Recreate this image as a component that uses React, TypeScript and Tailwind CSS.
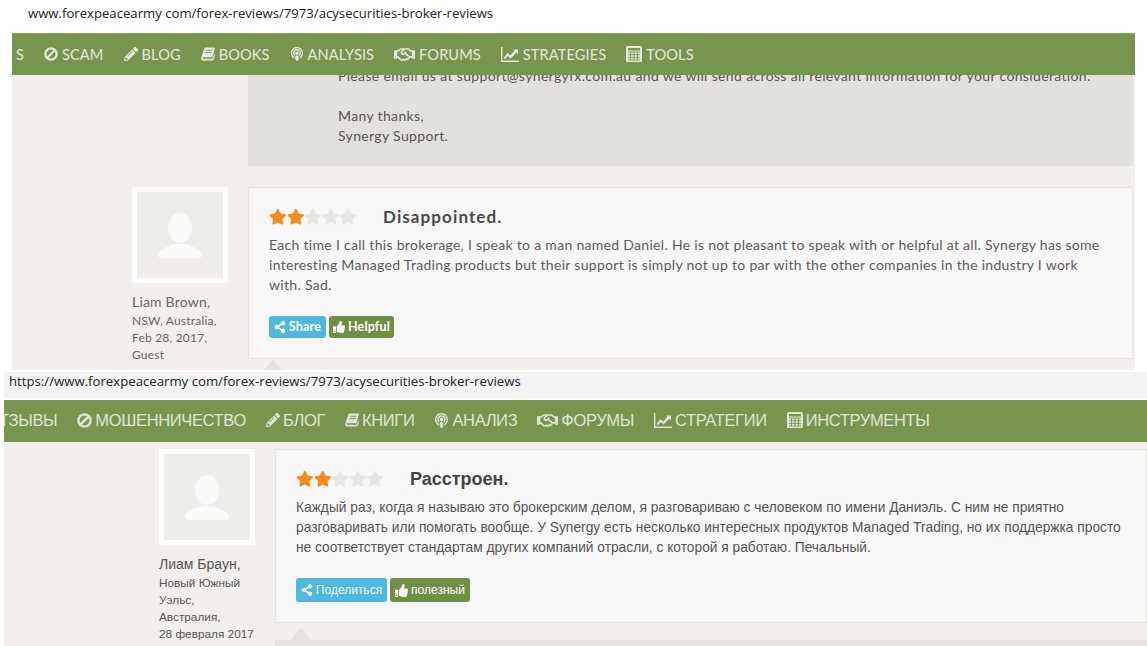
import type { ReactNode } from 'react'
import { FaPencilAlt, FaPodcast, FaRegHandshake, FaShareAlt, FaStar, FaThumbsUp } from 'react-icons/fa'

const TOP_FONT = "font-['Lato','Liberation_Sans',sans-serif]"
const RU_FONT = "font-['Liberation_Sans',Arial,sans-serif]"

// ─── Nav icons (old icon-font shapes, not in the packages) ───────────────────

function BanIcon({ size }: { size: number }) {
  return (
    <svg width={size} height={size} viewBox="0 0 16 16" fill="none" stroke="currentColor" strokeWidth="2.6">
      <circle cx="8" cy="8" r="6.5" />
      <path d="M3.5 12.5 L12.5 3.5" />
    </svg>
  )
}

function BookIcon() {
  return (
    <svg width="14" height="14" viewBox="0 0 15 14" fill="currentColor">
      <path d="M4 0 H15 L12.4 10.5 H2.4 C1.6 10.5 1.5 12 2.4 12 H12.6 L14.4 6 L14.6 11 L13 14 H2 C0.4 14 -0.3 12.4 0.2 11 Z" />
      <path d="M5.5 3 H12 M5 5.5 H11.4" stroke="#77954f" strokeWidth="1" />
    </svg>
  )
}

function ChartIcon() {
  return (
    <svg width="18" height="15" viewBox="0 0 18 15" fill="currentColor">
      <path d="M0 0 H1.4 V13.4 H18 V15 H0 Z" />
      <path d="M2.6 11 L6.4 6 L9.4 8.4 L13.4 3.6 L12 2.4 H17 V7.2 L15.4 5.8 L9.6 11.6 L6.8 9 L4 12 Z" />
    </svg>
  )
}

function CalcIcon() {
  return (
    <svg width="16" height="16" viewBox="0 0 16 16">
      <rect width="16" height="16" rx="1.5" fill="currentColor" />
      <rect x="2" y="2" width="12" height="2.5" fill="#77954f" />
      <path d="M2 6 H14 M2 8.7 H14 M2 11.4 H14 M2 14 H14 M4.5 6 V14 M8 6 V14 M11.5 6 V14" stroke="#77954f" strokeWidth="0.9" />
    </svg>
  )
}

// ─── Bits ─────────────────────────────────────────────────────────────────────

function NavItem({ icon, label, gap }: { icon: ReactNode; label: string; gap: string }) {
  return (
    <span className={`flex items-center shrink-0 ${gap}`}>
      {icon}
      <span>{label}</span>
    </span>
  )
}

function Stars() {
  return (
    <div className="flex w-[88px] shrink-0">
      {[0, 1, 2, 3, 4].map((i) => (
        <FaStar key={i} size={17.6} className={i < 2 ? 'text-[#f58a1f]' : 'text-[#e6e6e4]'} />
      ))}
    </div>
  )
}

function Avatar() {
  return (
    <div className="w-[96px] h-[96px] border-[5px] border-white bg-[#f0eeea] flex items-center justify-center shrink-0">
      <svg width="46" height="45" viewBox="0 0 46 45">
        <ellipse cx="23" cy="15" rx="12" ry="15" fill="#fbfaf9" />
        <path d="M1 42 C1 37 9 34 17 31 L29 31 C37 34 45 37 45 42 C45 44 44 45 42 45 H4 C2 45 1 44 1 42 Z" fill="#fbfaf9" />
      </svg>
    </div>
  )
}

const topNav = [
  { icon: <BanIcon size={14} />, label: 'SCAM' },
  { icon: <FaPencilAlt size={14} />, label: 'BLOG' },
  { icon: <BookIcon />, label: 'BOOKS' },
  { icon: <FaPodcast size={14} />, label: 'ANALYSIS' },
  { icon: <FaRegHandshake size={21} />, label: 'FORUMS' },
  { icon: <ChartIcon />, label: 'STRATEGIES' },
  { icon: <CalcIcon />, label: 'TOOLS' },
]

const ruNav = [
  { icon: <BanIcon size={15} />, label: 'МОШЕННИЧЕСТВО' },
  { icon: <FaPencilAlt size={14} />, label: 'БЛОГ' },
  { icon: <BookIcon />, label: 'КНИГИ' },
  { icon: <FaPodcast size={15} />, label: 'АНАЛИЗ' },
  { icon: <FaRegHandshake size={21} />, label: 'ФОРУМЫ' },
  { icon: <ChartIcon />, label: 'СТРАТЕГИИ' },
  { icon: <CalcIcon />, label: 'ИНСТРУМЕНТЫ' },
]

export default function App() {
  return (
    <div className="w-[1147px] h-[646px] overflow-hidden bg-white flex flex-col">
      {/* English capture */}
      <section className={`h-[370px] shrink-0 flex flex-col ${TOP_FONT}`}>
        <div className="h-[33px] shrink-0 pl-[28px] pt-[4px] text-[13.15px] leading-[18px] text-[#222] font-['Open_Sans',sans-serif]">
          www.forexpeacearmy com/forex-reviews/7973/acysecurities-broker-reviews
        </div>
        <div className="mx-[12px] flex-1 flex flex-col bg-[#f2efec] overflow-hidden">
          <nav className="h-[42px] shrink-0 bg-[#77954f] border-t border-[#8aa56a] flex items-center gap-[20px] overflow-hidden text-[14.6px] tracking-[0.1px] text-[#e4ebd9]">
            <span className="w-[12px] shrink-0 overflow-hidden flex justify-end">S</span>
            {topNav.map((n) => (
              <NavItem key={n.label} icon={n.icon} label={n.label} gap="gap-[4px]" />
            ))}
          </nav>
          <div className="ml-[236px] mr-[2px] h-[91px] shrink-0 bg-[#e3e1dc] pl-[90px] text-[14px] leading-[20px] tracking-[0.35px] text-[#555] overflow-hidden">
            <p className="-mt-[9px] whitespace-nowrap">Please email us at support@synergyfx.com.au and we will send across all relevant information for your consideration.</p>
            <p className="mt-[20px]">Many thanks,</p>
            <p>Synergy Support.</p>
          </div>
          <div className="flex mt-[21px] ml-[120px] mr-[2px]">
            <div className="w-[116px] shrink-0 text-[#666]">
              <Avatar />
              <p className="mt-[10px] text-[14px] leading-[18px] tracking-[0.2px]">Liam Brown,</p>
              <p className="mt-[1px] text-[12px] leading-[17px] tracking-[0.2px]">NSW, Australia,</p>
              <p className="text-[12px] leading-[17px] tracking-[0.2px]">Feb 28, 2017,</p>
              <p className="text-[12px] leading-[17px] tracking-[0.2px]">Guest</p>
            </div>
            <div className="flex-1 flex flex-col">
              <div className="h-[172px] shrink-0 bg-[#f7f7f7] border border-[#e4e4df] pl-[20px] pr-[28px] pt-[19px]">
                <div className="flex items-center">
                  <Stars />
                  <h3 className="ml-[26px] text-[17px] leading-[20px] font-bold tracking-[1.1px] text-[#4a4a4a]">Disappointed.</h3>
                </div>
                <p className="mt-[8px] text-[14px] leading-[20px] tracking-[0.3px] text-[#5c5c5c]">
                  Each time I call this brokerage, I speak to a man named Daniel. He is not pleasant to speak with or helpful at all. Synergy has some interesting Managed Trading products but their support is simply not up to par with the other companies in the industry I work with. Sad.
                </p>
                <div className="flex gap-[3px] mt-[21px]">
                  <button className="h-[22px] w-[57px] rounded-[3px] bg-[#50b8dc] text-white text-[12.5px] tracking-[0.2px] font-bold flex items-center justify-center gap-[3px]">
                    <FaShareAlt size={12} />Share
                  </button>
                  <button className="h-[22px] w-[65px] rounded-[3px] bg-[#6f8f47] text-white text-[12.5px] tracking-[0.2px] font-bold flex items-center justify-center gap-[3px]">
                    <FaThumbsUp size={12} />Helpful
                  </button>
                </div>
              </div>
              <div className="mt-[1px] ml-[16px] w-0 h-0 border-x-[9px] border-x-transparent border-b-[10px] border-b-[#e4e2dd]" />
            </div>
          </div>
        </div>
      </section>

      {/* Russian capture */}
      <section className={`h-[276px] shrink-0 pl-[4px] pt-[2px] flex flex-col ${RU_FONT}`}>
        <div className="h-[26px] shrink-0 bg-[#f3f3f3] pl-[5px] text-[13.2px] leading-[18px] text-[#222] font-['Open_Sans',sans-serif]">
          https://www.forexpeacearmy com/forex-reviews/7973/acysecurities-broker-reviews
        </div>
        <div className="h-[2px] shrink-0" />
        <nav className="h-[42px] shrink-0 bg-[#77954f] pb-[2px] flex items-center gap-[20px] overflow-hidden text-[16.5px] tracking-[-0.35px] text-[#dfe7d2]">
          <span className="shrink-0 -ml-[5px]">ТЗЫВЫ</span>
          {ruNav.map((n) => (
            <NavItem key={n.label} icon={n.icon} label={n.label} gap="gap-[3px]" />
          ))}
        </nav>
        <div className="flex-1 bg-[#f2efec] flex flex-col overflow-hidden">
          <div className="flex pt-[7px] pl-[155px]">
            <div className="w-[116px] shrink-0 text-[#555]">
              <Avatar />
              <p className="mt-[10px] text-[14px] leading-[18px]">Лиам Браун,</p>
              <p className="mt-[2px] w-[96px] text-[11.8px] leading-[17px]">Новый Южный Уэльс, Австралия,</p>
              <p className="text-[11.8px] leading-[17px] whitespace-nowrap">28 февраля 2017</p>
            </div>
            <div className="flex-1 flex flex-col">
              <div className="h-[174px] shrink-0 bg-[#f7f7f7] border border-[#e4e4df] pl-[20px] pr-[12px] pt-[19px]">
                <div className="flex items-center">
                  <Stars />
                  <h3 className="ml-[26px] text-[18px] leading-[20px] font-bold text-[#444]">Расстроен.</h3>
                </div>
                <p className="mt-[9px] text-[13.75px] leading-[20px] text-[#555]">
                  Каждый раз, когда я называю это брокерским делом, я разговариваю с человеком по имени Даниэль. С ним не приятно разговаривать или помогать вообще. У Synergy есть несколько интересных продуктов Managed Trading, но их поддержка просто не соответствует стандартам других компаний отрасли, с которой я работаю. Печальный.
                </p>
                <div className="flex gap-[3px] mt-[20px]">
                  <button className="h-[24px] w-[91px] rounded-[3px] bg-[#50b8dc] text-[#e8f6fb] text-[12px] flex items-center justify-center gap-[3px]">
                    <FaShareAlt size={12} />Поделиться
                  </button>
                  <button className="h-[24px] w-[80px] rounded-[3px] bg-[#6f8f47] text-white text-[12px] flex items-center justify-center gap-[3px]">
                    <FaThumbsUp size={13} />полезный
                  </button>
                </div>
              </div>
              <div className="mt-[4px] ml-[16px] w-0 h-0 border-x-[10px] border-x-transparent border-b-[13px] border-b-[#e6e3de]" />
              <div className="h-[6px] bg-[#e6e3de]" />
            </div>
          </div>
        </div>
      </section>
    </div>
  )
}
